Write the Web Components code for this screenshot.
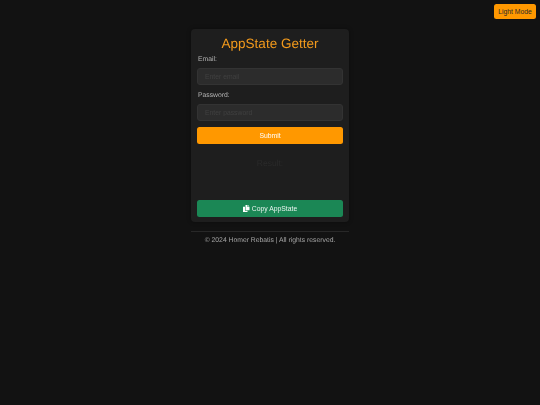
<!DOCTYPE html>
<html lang="en">
<head>
<meta charset="UTF-8">
<title>AppState Getter</title>
<style>
  html, body { margin: 0; padding: 0; height: 100%; }
  body { background: #121212; font-family: "Liberation Sans", Arial, sans-serif; overflow: hidden; text-rendering: geometricPrecision; }
</style>
</head>
<body>
<app-page>
  <theme-toggle slot="toggle">Light Mode</theme-toggle>
  <getter-card>
    <form-field label="Email:" placeholder="Enter email"></form-field>
    <form-field label="Password:" placeholder="Enter password"></form-field>
  </getter-card>
  <page-footer slot="footer">© 2024 Homer Rebatis | All rights reserved.</page-footer>
</app-page>

<script>
  class AppPage extends HTMLElement {
    constructor() {
      super();
      this.attachShadow({ mode: 'open' }).innerHTML = `
        <style>
          /* the reference is a downscaled capture, so everything is slightly soft */
          :host { display: flex; flex-direction: column; align-items: center; padding-top: 29px; min-height: 100%; box-sizing: border-box; filter: blur(.3px); }
          .toggle { position: absolute; top: 4px; right: 4px; }
        </style>
        <div class="toggle"><slot name="toggle"></slot></div>
        <slot></slot>
        <slot name="footer"></slot>
      `;
    }
  }

  class ThemeToggle extends HTMLElement {
    constructor() {
      super();
      this.attachShadow({ mode: 'open' }).innerHTML = `
        <style>
          :host { display: block; }
          button {
            display: block; width: 42px; height: 15px; padding: 0; border: 0; border-radius: 2.5px;
            background: #ff9800; color: #2a2a2a; font: 6.8px "Liberation Sans", Arial, sans-serif; cursor: pointer;
          }
        </style>
        <button><slot></slot></button>
      `;
    }
  }

  class GetterCard extends HTMLElement {
    constructor() {
      super();
      this.attachShadow({ mode: 'open' }).innerHTML = `
        <style>
          :host {
            display: block; width: 158px; height: 193px; box-sizing: border-box; padding: 6px 6px 5px;
            background: #1e1e1e; border-radius: 4px; box-shadow: 0 0 4px rgba(0,0,0,.4);
          }
          .wrap { display: flex; flex-direction: column; height: 100%; }
          h1 { margin: 1px 0 3px; font-size: 13.5px; line-height: 16px; font-weight: 400; text-align: center; color: #f39a1c; }
          .fields { display: flex; flex-direction: column; gap: 6px; }
          button {
            display: flex; align-items: center; justify-content: center; gap: 2px;
            width: 100%; border: 0; padding: 0 0 1px; border-radius: 2.5px; color: #fff;
            font: 6.8px "Liberation Sans", Arial, sans-serif; cursor: pointer;
          }
          .submit { height: 17px; margin-top: 6px; background: #ff9800; }
          .result { flex: 1; display: flex; align-items: center; justify-content: center; padding-bottom: 18px; font-size: 8.5px; color: #2a2a2a; }
          .copy { height: 17px; background: #1b8755; color: #e8f3ee; }
          svg { width: 7px; height: 7px; fill: #fff; }
        </style>
        <div class="wrap">
          <h1>AppState Getter</h1>
          <div class="fields"><slot></slot></div>
          <button class="submit">Submit</button>
          <div class="result">Result:</div>
          <button class="copy">
            <svg viewBox="0 0 14 14"><path d="M5 0h4v4h4v6.5H5z"/><path d="M10 0l3 3h-3z"/><path d="M0 3.5h4v8h5V14H0z"/></svg>
            Copy AppState
          </button>
        </div>
      `;
    }
  }

  class FormField extends HTMLElement {
    constructor() {
      super();
      this.attachShadow({ mode: 'open' }).innerHTML = `
        <style>
          :host { display: block; }
          label { display: block; font-size: 6.8px; line-height: 9px; margin: 0 0 4px 1px; color: #b4b4b4; }
          input {
            display: block; width: 100%; height: 17px; box-sizing: border-box; padding: 0 7px;
            background: #2c2c2c; border: 1px solid #333; border-radius: 3px;
            font: 6.8px "Liberation Sans", Arial, sans-serif; color: #ddd; outline: 0;
          }
          input::placeholder { color: #404040; opacity: 1; }
        </style>
        <label></label>
        <input>
      `;
    }
    connectedCallback() {
      this.shadowRoot.querySelector('label').textContent = this.getAttribute('label');
      this.shadowRoot.querySelector('input').placeholder = this.getAttribute('placeholder');
    }
  }

  class PageFooter extends HTMLElement {
    constructor() {
      super();
      this.attachShadow({ mode: 'open' }).innerHTML = `
        <style>
          :host {
            display: block; width: 158px; margin-top: 9px; padding-top: 4px;
            border-top: 1px solid #282828; text-align: center; font-size: 6.8px; line-height: 9px; color: #a5a5a5; white-space: nowrap;
          }
        </style>
        <slot></slot>
      `;
    }
  }

  customElements.define('app-page', AppPage);
  customElements.define('theme-toggle', ThemeToggle);
  customElements.define('getter-card', GetterCard);
  customElements.define('form-field', FormField);
  customElements.define('page-footer', PageFooter);
</script>
</body>
</html>
